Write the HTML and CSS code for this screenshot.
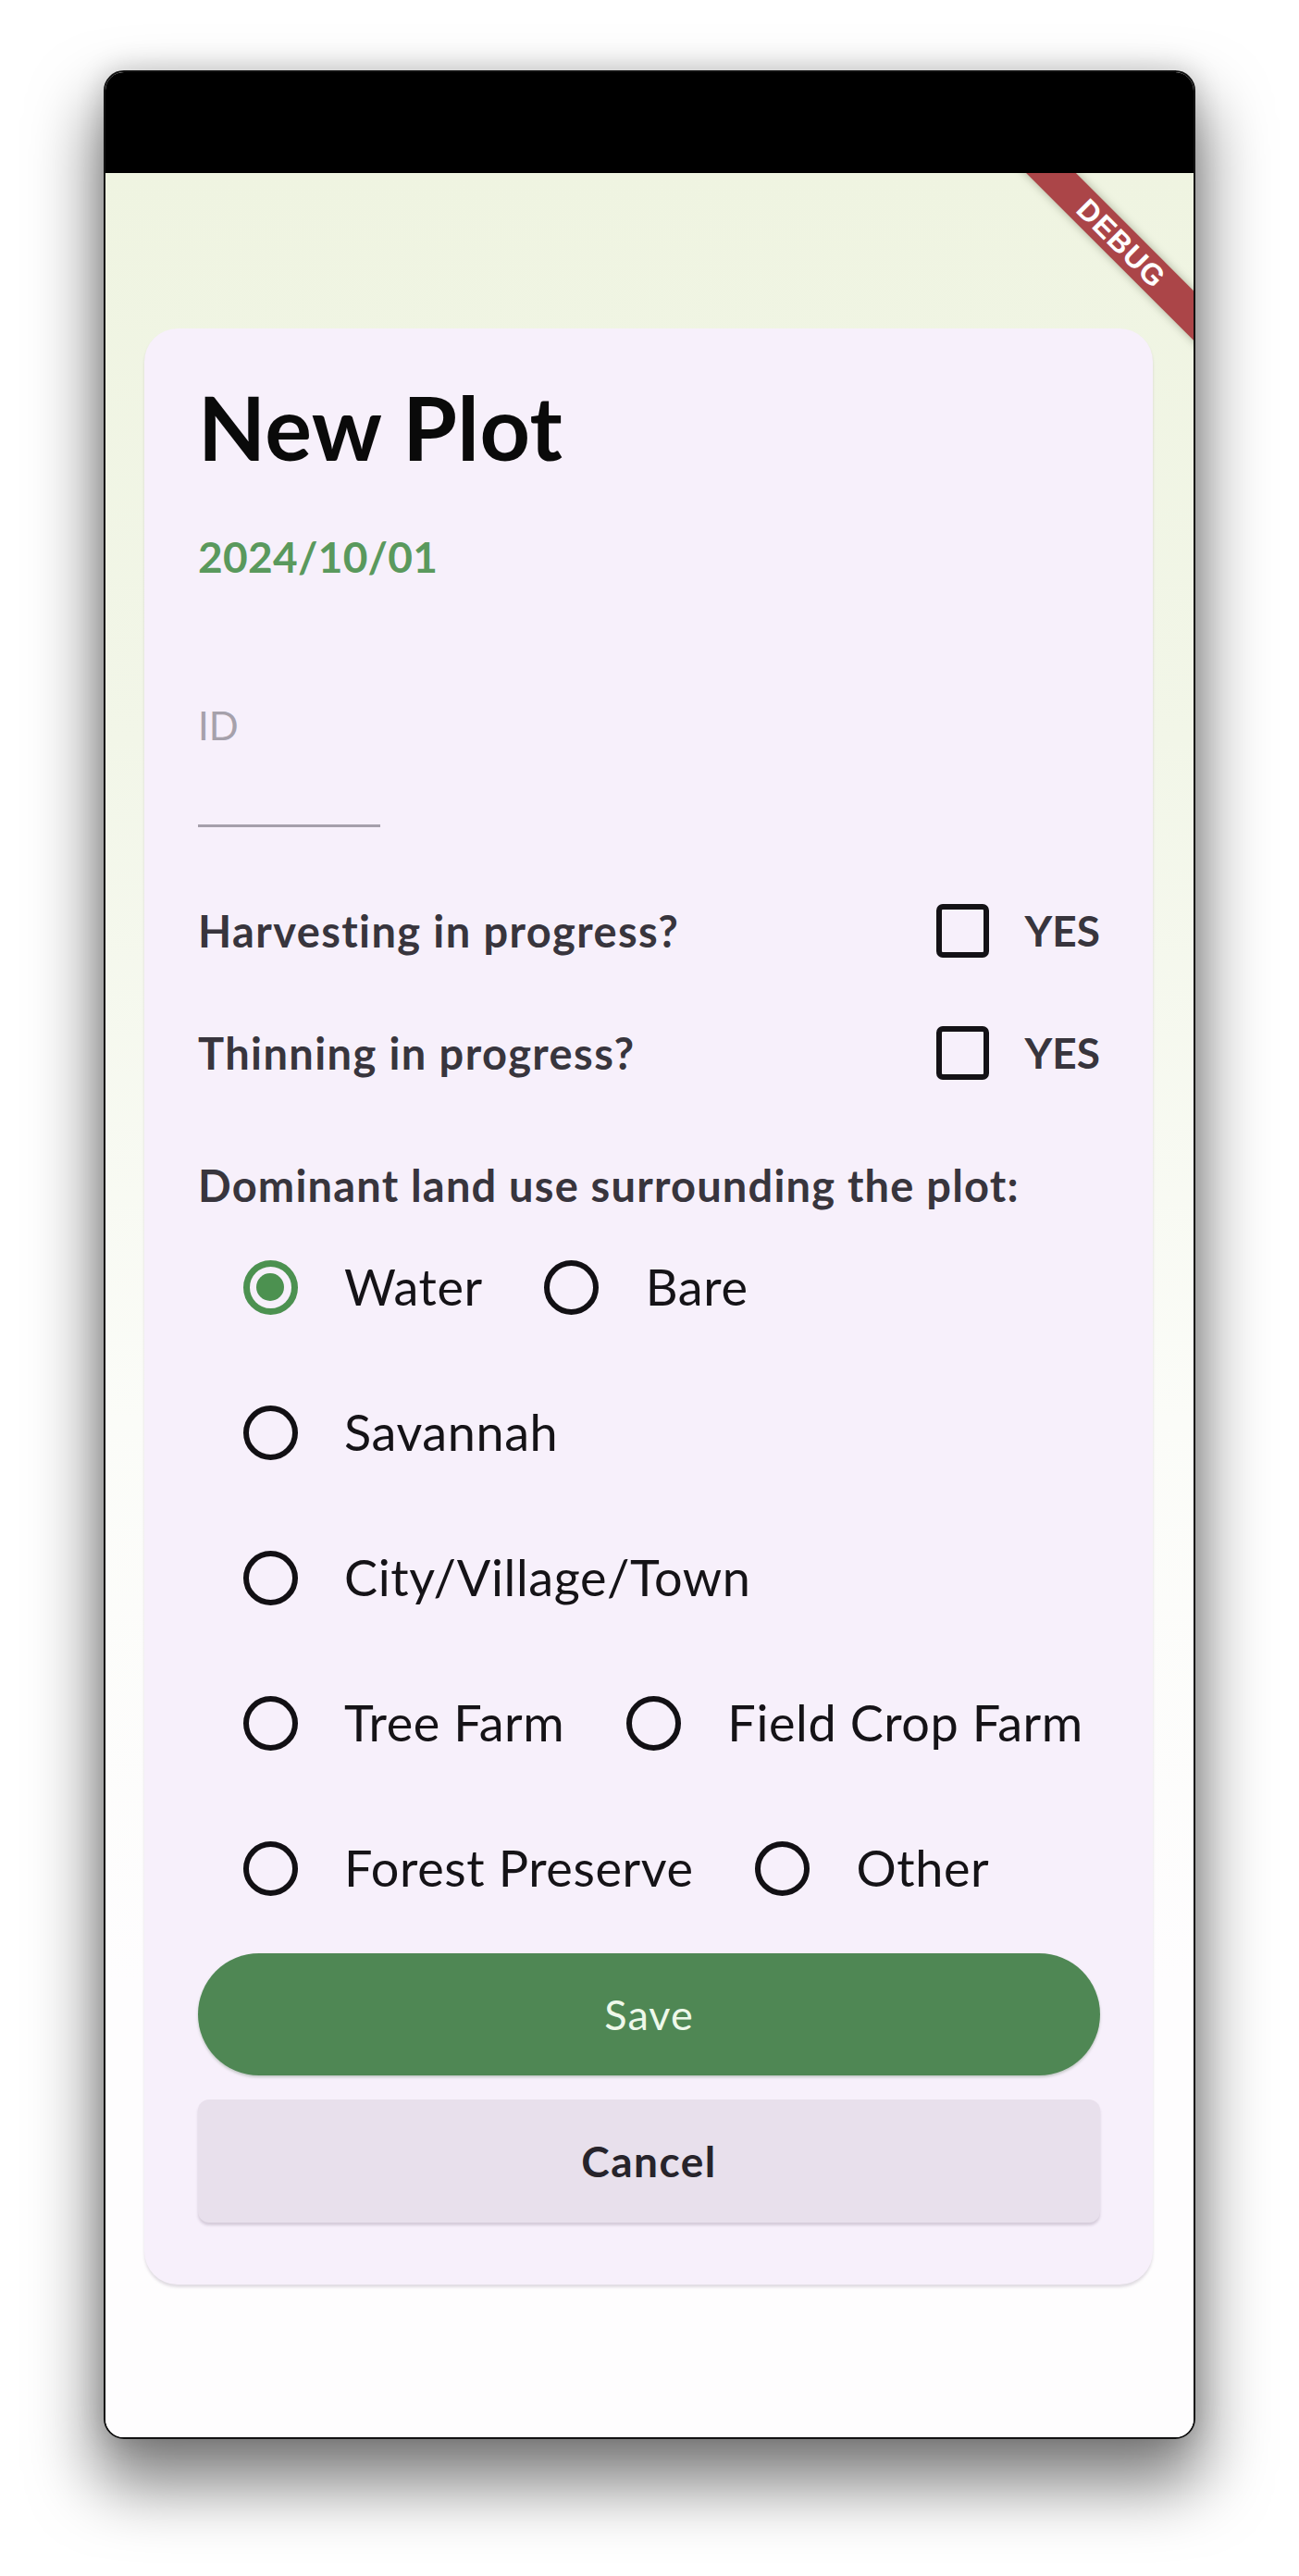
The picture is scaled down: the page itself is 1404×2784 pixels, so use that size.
FILE: index.html
```html
<!DOCTYPE html>
<html lang="en">
<head>
<meta charset="utf-8">
<title>New Plot</title>
<link rel="stylesheet" href="styles.css">
</head>
<body>
<div class="phone">
  <div class="status-bar"></div>
  <div class="screen">
    <div class="debug-banner"><span>DEBUG</span></div>
    <div class="card">
      <h1 class="title">New Plot</h1>
      <div class="date">2024/10/01</div>
      <div class="field"><span class="field-label">ID</span></div>

      <div class="check-row first">
        <span class="q-label">Harvesting in progress?</span>
        <span class="checkbox"></span>
        <span class="yes">YES</span>
      </div>
      <div class="check-row">
        <span class="q-label">Thinning in progress?</span>
        <span class="checkbox"></span>
        <span class="yes">YES</span>
      </div>

      <div class="section-label">Dominant land use surrounding the plot:</div>

      <div class="radio-group">
        <div class="radio-row">
          <div class="radio-item"><span class="radio-area"><span class="radio selected"></span></span><span class="radio-text">Water</span></div>
          <div class="radio-item"><span class="radio-area"><span class="radio"></span></span><span class="radio-text">Bare</span></div>
        </div>
        <div class="radio-row">
          <div class="radio-item"><span class="radio-area"><span class="radio"></span></span><span class="radio-text">Savannah</span></div>
        </div>
        <div class="radio-row">
          <div class="radio-item"><span class="radio-area"><span class="radio"></span></span><span class="radio-text">City/Village/Town</span></div>
        </div>
        <div class="radio-row">
          <div class="radio-item"><span class="radio-area"><span class="radio"></span></span><span class="radio-text">Tree Farm</span></div>
          <div class="radio-item"><span class="radio-area"><span class="radio"></span></span><span class="radio-text">Field Crop Farm</span></div>
        </div>
        <div class="radio-row">
          <div class="radio-item"><span class="radio-area"><span class="radio"></span></span><span class="radio-text">Forest Preserve</span></div>
          <div class="radio-item"><span class="radio-area"><span class="radio"></span></span><span class="radio-text">Other</span></div>
        </div>
      </div>

      <button class="btn btn-save" type="button">Save</button>
      <button class="btn btn-cancel" type="button">Cancel</button>
    </div>
  </div>
</div>
</body>
</html>
```

FILE: styles.css
```css
* { box-sizing: border-box; }

html, body {
  margin: 0;
  padding: 0;
  background: #ffffff;
}

body {
  width: 1404px;
  height: 2784px;
  overflow: hidden;
  font-family: "Lato", "Liberation Sans", sans-serif;
}

.phone {
  margin: 76px 0 0 112px;
  width: 1180px;
  height: 2560px;
  border: 2px solid #111;
  border-radius: 22px;
  overflow: hidden;
  display: flex;
  flex-direction: column;
  box-shadow: 0 42px 70px 8px rgba(0, 0, 0, 0.5), 0 0 30px rgba(0, 0, 0, 0.18);
  background: #fefdfe;
}

.status-bar {
  height: 109px;
  background: #000;
  flex: none;
}

.screen {
  position: relative;
  flex: 1;
  overflow: hidden;
  padding: 168px 44px 0 42px;
  background: linear-gradient(to bottom, #eff4e1 0%, #f2f6e8 25%, #fbfcf8 55%, #fefdfe 80%);
}

.debug-banner {
  position: absolute;
  width: 420px;
  height: 38px;
  right: -132px;
  top: 57px;
  transform: rotate(45deg);
  background: #ab4548;
  box-shadow: 0 0 10px rgba(40, 50, 20, 0.35);
  display: flex;
  align-items: center;
  justify-content: center;
}

.debug-banner span {
  color: #fff;
  font-family: "Liberation Sans", "Lato", sans-serif;
  font-weight: 700;
  font-size: 32px;
  letter-spacing: 1px;
  line-height: 1;
}

.card {
  background: #f7f0fb;
  border-radius: 36px;
  padding: 46px 57px 67px 58px;
  box-shadow: 0 3px 3px rgba(90, 70, 100, 0.18);
  display: flex;
  flex-direction: column;
}

.title {
  margin: 0;
  font-size: 95px;
  line-height: 120px;
  font-weight: 700;
  color: #0a0a0a;
  letter-spacing: 0.5px;
}

.date {
  margin-top: 51px;
  font-size: 46px;
  line-height: 60px;
  font-weight: 700;
  color: #5a995d;
  letter-spacing: 0.3px;
}

.field {
  margin-top: 127px;
  width: 197px;
  border-bottom: 3px solid #a59fab;
  padding-bottom: 82px;
}

.field-label {
  display: block;
  font-size: 42px;
  line-height: 50px;
  color: #a6a1ab;
}

.check-row {
  display: flex;
  align-items: center;
  height: 80px;
  margin-top: 52px;
}

.check-row.first {
  margin-top: 72px;
}

.q-label {
  flex: 1;
  font-size: 47px;
  font-weight: 700;
  color: #38353d;
  line-height: 80px;
  letter-spacing: 1.4px;
}

.checkbox {
  width: 57px;
  height: 58px;
  border: 6px solid #141216;
  border-radius: 7px;
  flex: none;
}

.yes {
  margin-left: 39px;
  font-size: 46px;
  font-weight: 700;
  color: #38353d;
  line-height: 80px;
}

.section-label {
  margin-top: 65px;
  font-size: 47px;
  line-height: 76px;
  font-weight: 700;
  color: #38353d;
  letter-spacing: 1.2px;
}

.radio-group {
  display: flex;
  flex-direction: column;
  gap: 13px;
}

.radio-row {
  display: flex;
  align-items: center;
  height: 144px;
  padding-left: 6px;
  gap: 24px;
}

.radio-item {
  display: flex;
  align-items: center;
}

.radio-area {
  width: 144px;
  height: 144px;
  display: flex;
  align-items: center;
  justify-content: center;
  flex: none;
}

.radio {
  width: 59px;
  height: 59px;
  border-radius: 50%;
  border: 6px solid #121014;
  position: relative;
}

.radio.selected {
  border: 7px solid #4c9150;
}

.radio.selected::after {
  content: "";
  position: absolute;
  left: 7.5px;
  top: 7.5px;
  width: 30px;
  height: 30px;
  border-radius: 50%;
  background: #4c9150;
}

.radio-text {
  margin-left: 8px;
  font-size: 54px;
  line-height: 70px;
  color: #151317;
  letter-spacing: 0.6px;
}

.btn {
  display: block;
  width: 100%;
  border: none;
  font-family: inherit;
  padding: 0;
  cursor: pointer;
}

.btn-save {
  margin-top: 20px;
  height: 132px;
  border-radius: 66px;
  background: #4f8754;
  color: #eef8ea;
  font-size: 45px;
  font-weight: 400;
  letter-spacing: 1px;
  box-shadow: 0 2px 3px rgba(40, 80, 40, 0.25);
}

.btn-cancel {
  margin-top: 26px;
  height: 133px;
  border-radius: 12px;
  background: #e8e0ec;
  color: #27242b;
  font-size: 46px;
  font-weight: 700;
  letter-spacing: 1.5px;
  box-shadow: 0 3px 3px rgba(80, 60, 90, 0.2);
}
```
